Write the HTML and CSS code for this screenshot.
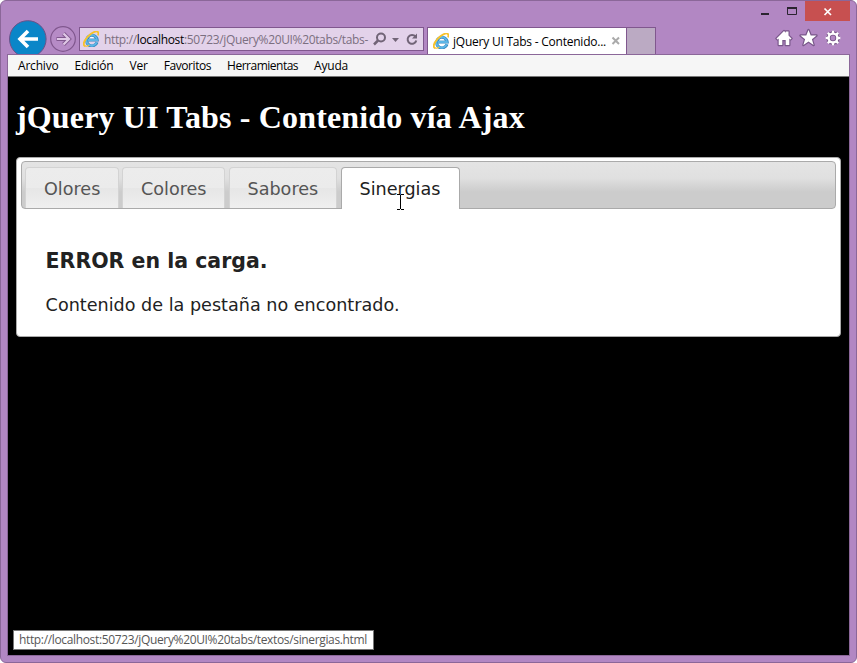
FILE: index.html
```html
<!DOCTYPE html>
<html lang="es">
<head>
<meta charset="utf-8">
<title>jQuery UI Tabs - Contenido vía Ajax</title>
<link rel="stylesheet" href="styles.css">
</head>
<body>
<svg class="defs" width="0" height="0">
  <defs>
    <symbol id="ie" viewBox="0 0 16 16">
      <path d="M14 11.200A5.300 5.300 0 1 1 14.200 9H5" fill="none" stroke="#3487c0" stroke-width="3"/>
      <path d="M13.700 11.200A5.300 5.300 0 1 1 14 9H5" fill="none" stroke="#5cb6e6" stroke-width="1.900"/>
      <path d="M6.400 7.300h4.800a2.500 2.300 0 0 0-4.800 0z" fill="#fff"/>
      <path d="M2.600 15.200C-.6 14.800.6 10 4.600 5.800C8.700 1.500 13.600-.7 15 1.100c.7.900.5 2.100 0 3.300" fill="none" stroke="#f7c22c" stroke-width="1.900"/>
      <path d="M2.600 15.200c1.300.2 2.500-.3 3.600-1" fill="none" stroke="#f7c22c" stroke-width="1.200"/>
    </symbol>
  </defs>
</svg>
<div class="window">
  <header class="titlebar">
    <svg class="win-controls" width="48" height="19" viewBox="0 0 48 19"><path d="M4 12h8v2H4z" fill="#2b2430"/><path d="M30.500 7.500h9v6h-9z" fill="none" stroke="#2b2430"/><path d="M30 6h10v2H30z" fill="#2b2430"/></svg>
    <div class="close"><svg width="45" height="20" viewBox="0 0 45 20"><path d="M19.500 7.500l6.500 6.500M26 7.500L19.500 14" stroke="#fff" stroke-width="1.700"/></svg></div>
  </header>
  <nav class="toolbar">
    <svg class="history" width="71" height="34" viewBox="0 0 71 34">
      <circle cx="19.800" cy="19" r="18.300" fill="#0a86c8" stroke="#6a5288"/>
      <path d="M30 19H12.500M20 11l-8 8 8 8" fill="none" stroke="#fff" stroke-width="3.600"/>
      <circle cx="55" cy="19" r="12.300" fill="#b68bc6" stroke="#80578e" stroke-width="1.200"/>
      <path d="M48.500 19h12M55.500 13.500l5.500 5.500-5.500 5.500" fill="none" stroke="#80578e" stroke-width="4"/>
      <path d="M49 19h11.500M55.500 13.500l5.500 5.500-5.500 5.500" fill="none" stroke="#dfc8e6" stroke-width="2.200"/>
    </svg>
    <div class="address">
      <svg width="16" height="16"><use href="#ie"/></svg>
      <span class="url">http://<b>localhost</b>:50723/jQuery%20UI%20tabs/tabs-</span>
      <svg class="address-icons" width="48" height="18" viewBox="0 0 48 18" fill="none" stroke="#716477">
        <circle cx="8" cy="7.500" r="4" stroke-width="2"/><path d="M5 10.500L1 14.500" stroke-width="2.500"/>
        <path d="M19 8h7l-3.500 4z" fill="#716477" stroke="none"/>
        <path d="M42.500 6.700A4.400 4.400 0 1 0 43.300 10.500" stroke-width="2"/><path d="M44 3.500v5h-5z" fill="#716477" stroke="none"/>
      </svg>
    </div>
    <div class="tab">
      <svg width="16" height="16"><use href="#ie"/></svg>
      <span class="tab-title">jQuery UI Tabs - Contenido...</span>
      <svg class="tab-close" width="10" height="10" viewBox="0 0 10 10"><path d="M1.500 1.500l6.500 6.500M8 1.500L1.500 8" stroke="#aaa" stroke-width="2"/></svg>
    </div>
    <div class="new-tab"></div>
    <svg class="tools" width="68" height="22" viewBox="0 0 68 22">
      <g stroke="#79578a" stroke-width="2.400" fill="#79578a" stroke-linejoin="round"><use href="#home"/><use href="#star"/></g>
      <g fill="#fff"><path id="home" d="M1.500 11.500L9 4l1.800 1.800V4.500h2.700v4l3 3-1 1-1.200-1V18h-3.600v-5H7.300v5H3.700v-6.500l-1.200 1z"/>
      <path id="star" d="M33.500 3l2.200 5.500h5.800l-4.600 3.800 1.700 5.700-5.100-3.400-5.100 3.400 1.700-5.700-4.600-3.800h5.800z"/></g>
      <g fill="none" stroke="#79578a" stroke-width="4.200"><circle cx="58" cy="11" r="4.500"/><path d="M58 4v2M58 16v2M51 11h2M63 11h2M53 6l1.500 1.500M61.500 14.500L63 16M63 6l-1.500 1.500M54.500 14.500L53 16"/></g>
      <g fill="none" stroke="#fff" stroke-width="2.400"><circle cx="58" cy="11" r="4.400"/><path d="M58 3.700v2.500M58 15.800v2.500M50.700 11h2.500M62.800 11h2.500M52.800 5.800l1.900 1.900M61.300 14.300l1.900 1.900M63.200 5.800l-1.900 1.900M54.700 14.300l-1.900 1.900"/></g>
    </svg>
  </nav>
  <div class="client">
    <div class="menu">
      <span>Archivo</span><span>Edición</span><span>Ver</span><span class="fav">Favoritos</span><span class="her">Herramientas</span><span>Ayuda</span>
    </div>
    <main class="page">
      <h1>jQuery UI Tabs - Contenido vía Ajax</h1>
      <section class="tabs">
        <ul class="tabs-nav">
          <li class="t1">Olores</li><li class="t2">Colores</li><li class="t3">Sabores</li><li class="t4 active">Sinergias
            <svg class="cursor" width="7" height="16" viewBox="0 0 7 16"><path d="M0 .5h3M4 .5h3M3.500 1v14M0 15.500h3M4 15.500h3" stroke="#000"/></svg></li>
        </ul>
        <div class="panel">
          <h3>ERROR en la carga.</h3>
          <p>Contenido de la pestaña no encontrado.</p>
        </div>
      </section>
      <div class="status">http://localhost:50723/jQuery%20UI%20tabs/textos/sinergias.html</div>
    </main>
  </div>
</div>
</body>
</html>
```
FILE: styles.css
```css
* { box-sizing: border-box; }
body { margin: 0; background: #fff; font: 12px/16px "Open Sans", "Noto Sans", sans-serif; }
.defs { position: absolute; }
svg { display: block; flex: none; }
.window { width: 857px; height: 663px; border: 1px solid #8b6799; border-radius: 6px; background: #b287c3; display: flex; flex-direction: column; overflow: hidden; }
.titlebar { height: 19px; display: flex; justify-content: flex-end; padding-right: 6px; flex: none; }
.win-controls { width: 48px; }
.close { width: 45px; height: 20px; background: #c75050; flex: none; }
.toolbar { height: 34px; display: flex; padding: 0 7px; flex: none; }
.address { width: 345px; height: 24px; margin-top: 7px; border: 1px solid #80578e; background: #e3d2ea; display: flex; align-items: center; padding-left: 3px; color: #7b6f80; white-space: nowrap; flex: none; }
.url { margin-left: 5px; width: 266px; letter-spacing: -0.35px; padding-top: 1px; }
.url b { font-weight: 400; color: #000; }
.address-icons { margin-left: 3px; }
.tab { width: 200px; height: 27px; margin: 7px 0 0 3px; border: 1px solid #80578e; border-bottom: 0; background: #fff; display: flex; align-items: center; padding-left: 5px; white-space: nowrap; flex: none; }
.tab-title { margin-left: 4px; width: 158px; letter-spacing: -0.23px; padding-top: 1px; }
.new-tab { width: 29px; height: 27px; margin-top: 7px; border: 1px solid #80578e; border-left: 0; border-bottom: 0; background: #bbaac3; flex: none; }
.tools { margin: 7px 6px 0 auto; }
.client { margin: 0 6px 0 6px; width: 843px; height: 602px; border: 1px solid #8b6799; display: flex; flex-direction: column; flex: none; }
.menu { height: 22px; background: #f6f6f6; border-bottom: 1px solid #777; display: flex; gap: 16px; padding: 3px 10px 0; letter-spacing: -0.2px; flex: none; }
.fav { letter-spacing: -0.42px; }
.her { letter-spacing: -0.5px; }
.page { flex: 1; background: #000; padding: 0 8px; display: flex; flex-direction: column; align-items: flex-start; }
h1 { margin: 21px 0; font: bold 32px/38px "Liberation Serif", serif; letter-spacing: 0.16px; color: #fff; white-space: nowrap; }
.tabs { width: 825px; height: 180px; border: 1px solid #aaa; border-radius: 4px; background: #fff; padding: 3px 4px; font: 17.6px/24px "DejaVu Sans", sans-serif; color: #222; }
.tabs-nav { list-style: none; margin: 0; height: 48px; width: 815px; border: 1px solid #aaa; border-radius: 4px; padding: 5px 3px 0; display: flex; gap: 3px; background: linear-gradient(#e4e4e4 0, #e0e0e0 35%, #ccc 65%, #ccc 100%); }
.tabs-nav li { height: 41px; border: 1px solid #d3d3d3; border-bottom: 0; border-radius: 4px 4px 0 0; background: linear-gradient(#ececec 0, #ebebeb 50%, #e6e6e6 51%, #efefef 100%); color: #555; padding: 9px 0 0 18px; flex: none; white-space: nowrap; }
.t1 { width: 94px; }
.tabs-nav .t2 { width: 103px; margin-right: 1px; }
.tabs-nav .t3 { width: 108px; margin-right: 1px; padding-left: 17.5px; }
.t4 { width: 119px; }
.tabs-nav li.active { position: relative; height: 42px; padding-left: 17.5px; border-color: #aaa; background: #fff; color: #212121; }
.cursor { position: absolute; left: 55px; top: 26px; }
.panel { padding: 0 24.6px; }
h3 { margin: 39px 0 19px; font-size: 20.5px; line-height: 26px; }
p { margin: 0; }
.status { margin: auto 0 5px -3px; width: 361px; height: 20px; border: 1px solid #777; background: #fff; color: #575757; padding: 1px 5px; white-space: nowrap; letter-spacing: -0.35px; }
```
